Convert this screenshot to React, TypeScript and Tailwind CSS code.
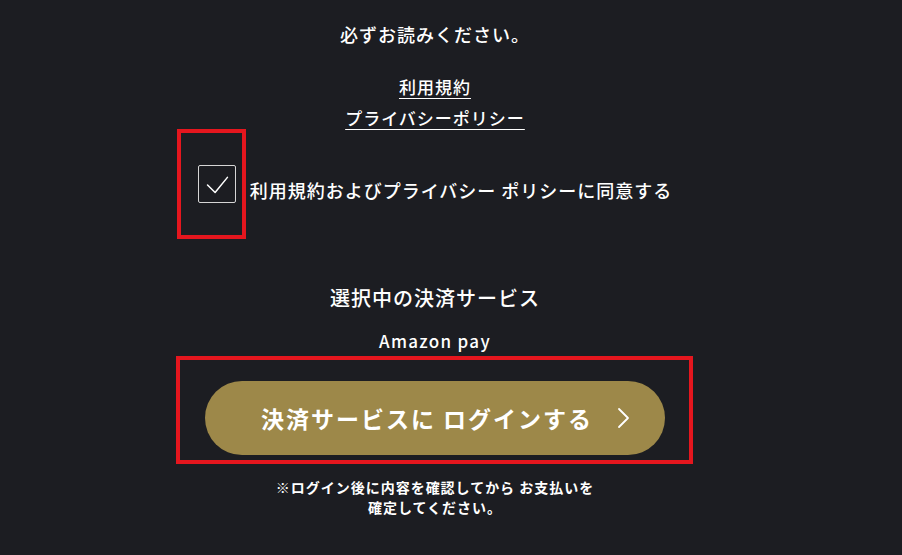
import React from "react";

const font = { fontFamily: '"Noto Sans CJK JP", "Noto Sans", sans-serif' };

function CheckIcon() {
  return (
    <svg width="38" height="38" viewBox="0 0 38 38" fill="none">
      <polyline points="9,20 17,28 30,12" stroke="#ffffff" strokeWidth="1.6" strokeLinecap="round" strokeLinejoin="round" />
    </svg>
  );
}

function ChevronRight() {
  return (
    <svg width="14" height="22" viewBox="0 0 14 22" fill="none">
      <polyline points="3,2 12,11 3,20" stroke="#ffffff" strokeWidth="1.8" strokeLinecap="round" strokeLinejoin="round" />
    </svg>
  );
}

export default function App() {
  return (
    <div className="min-h-[555px] w-[902px] bg-[#1c1d22] text-white" style={font}>
      <div className="flex w-[870px] flex-col items-center pt-[22px]">
        <p className="text-[18px] leading-[24px] font-medium tracking-[1px]">必ずお読みください。</p>

        <div className="mt-[29px] flex flex-col items-center gap-[7px]">
          <a href="#" className="text-[17px] leading-[24px] font-medium tracking-[1px] underline underline-offset-[4px]">
            利用規約
          </a>
          <a href="#" className="text-[17px] leading-[24px] font-medium tracking-[1px] underline underline-offset-[4px]">
            プライバシーポリシー
          </a>
        </div>

        <label className="mt-[35px] flex items-center gap-[14px]">
          <span className="relative block h-[38px] w-[38px]">
            <span className="flex h-[38px] w-[38px] items-center justify-center rounded-[2px] border border-[#d6d6d6]">
              <CheckIcon />
            </span>
            <span className="pointer-events-none absolute left-[-21px] top-[-36px] h-[110px] w-[69px] border-4 border-[#e5161e]" />
          </span>
          <span className="pt-[12px] text-[18px] leading-[24px] font-medium tracking-[1px]">
            利用規約およびプライバシー ポリシーに同意する
          </span>
        </label>

        <h2 className="mt-[81px] text-[20px] leading-[28px] font-medium tracking-[1px]">選択中の決済サービス</h2>
        <p className="mt-[17px] text-[17px] leading-[24px] font-medium tracking-[1.3px]">Amazon pay</p>

        <div className="relative mt-[28px]">
          <button className="relative flex h-[74px] w-[460px] items-center justify-center rounded-full bg-[#9d8849] pr-[16px] text-[23px] font-bold tracking-[2px] text-white">
            決済サービスに ログインする
            <span className="absolute right-[35px] top-[26px]">
              <ChevronRight />
            </span>
          </button>
          <span className="pointer-events-none absolute left-[-29px] top-[-25px] h-[108px] w-[517px] border-4 border-[#e5161e]" />
        </div>

        <p className="mt-[22px] text-center text-[14px] leading-[20px] font-bold tracking-[0.07em]">
          ※ログイン後に内容を確認してから お支払いを
          <br />
          確定してください。
        </p>
      </div>
    </div>
  );
}
